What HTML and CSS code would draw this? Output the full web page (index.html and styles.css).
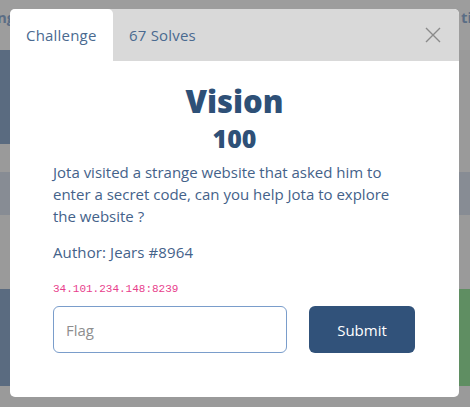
FILE: index.html
```html
<!DOCTYPE html>
<html>
<head>
<meta charset="utf-8">
<link rel="stylesheet" href="styles.css">
</head>
<body>
<div class="page">
  <div class="topbar"><span class="nav-l">ng</span><span class="nav-r">ti</span></div>
  <div class="row r1"><div class="blk blue"></div><div class="blk"></div></div>
  <div class="row r2"></div>
  <div class="row r3"></div>
  <div class="row r4"></div>
  <div class="row r5"><div class="blk blue"></div><div class="blk green"></div></div>
</div>
<div class="modal">
  <div class="tabs">
    <div class="tab active">Challenge</div>
    <div class="tab">67 Solves</div>
    <div class="close">
      <svg width="16" height="16" viewBox="0 0 16 16"><path d="M1 1 L15 15 M15 1 L1 15" stroke="#8a8a8a" stroke-width="1.4" fill="none"/></svg>
    </div>
  </div>
  <div class="body">
    <h1 class="title">Vision</h1>
    <h2 class="value">100</h2>
    <p class="desc">Jota visited a strange website that asked him to enter a secret code, can you help Jota to explore the website ?</p>
    <p class="author">Author: Jears #8964</p>
    <code class="ip">34.101.234.148:8239</code>
    <div class="form">
      <input class="flag" type="text" placeholder="Flag">
      <button class="submit">Submit</button>
    </div>
  </div>
</div>
</body>
</html>
```
FILE: styles.css
```css
html, body { margin: 0; padding: 0; }
body { background: #9a9a9a; width: 470px; height: 407px; overflow: hidden; position: relative; font-family: "Open Sans", sans-serif; }
.page { display: flex; flex-direction: column; }
.topbar { height: 50px; background: #9d9d9d; position: relative; font-weight: bold; color: #5a6d85; font-size: 15px; display: flex; justify-content: space-between; align-items: flex-start; padding-top: 7px; box-sizing: border-box; }
.nav-l { margin-left: -3px; }
.nav-r { margin-right: -2px; }
.row { display: flex; justify-content: space-between; }
.r1 { height: 94px; }
.r2 { height: 28px; }
.r3 { height: 43px; background: #878c94; }
.r4 { height: 74px; }
.r5 { height: 97px; }
.blk { width: 12px; }
.blue { background: #5a6b80; }
.green { background: #5f8e62; }

.modal { position: absolute; left: 10px; top: 9px; width: 449px; height: 388px; background: #fff; border-radius: 5px; overflow: hidden; }
.tabs { height: 52px; background: #d9d9d9; display: flex; align-items: stretch; }
.tab { padding: 0 16px; display: flex; align-items: center; font-size: 15px; letter-spacing: 0.2px; color: #4a6a90; }
.tab.active { background: #fff; border-radius: 5px 5px 0 0; width: 103px; box-sizing: border-box; }
.close { margin-left: auto; margin-right: 18px; display: flex; align-items: center; }
.body { padding: 0 43px; display: flex; flex-direction: column; color: #44628a; }
.title { margin: 22px 0 0; font-size: 31px; line-height: 36px; font-weight: 800; color: #2e5077; text-align: center; }
.value { margin: 4px 0 0; font-size: 25px; line-height: 30px; font-weight: 800; color: #2e5077; text-align: center; }
.desc { margin: 8px 0 0; font-size: 15px; line-height: 22px; }
.author { margin: 14px 0 0; font-size: 15px; line-height: 22px; letter-spacing: 0.1px; }
.ip { margin-top: 19px; font-family: "Liberation Mono", monospace; font-size: 11px; line-height: 14px; color: #e83e8c; }
.form { display: flex; gap: 22px; margin-top: 10px; }
.flag { width: 234px; height: 47px; box-sizing: border-box; border: 1px solid #7a9dcb; border-radius: 6px; padding: 0 12px; font-family: "Open Sans", sans-serif; font-size: 15px; color: #333; outline: none; }
.flag::placeholder { color: #8e8e8e; }
.submit { width: 106px; height: 47px; border: none; border-radius: 6px; background: #31527a; color: #fff; font-family: "Open Sans", sans-serif; font-size: 15px; }
```
